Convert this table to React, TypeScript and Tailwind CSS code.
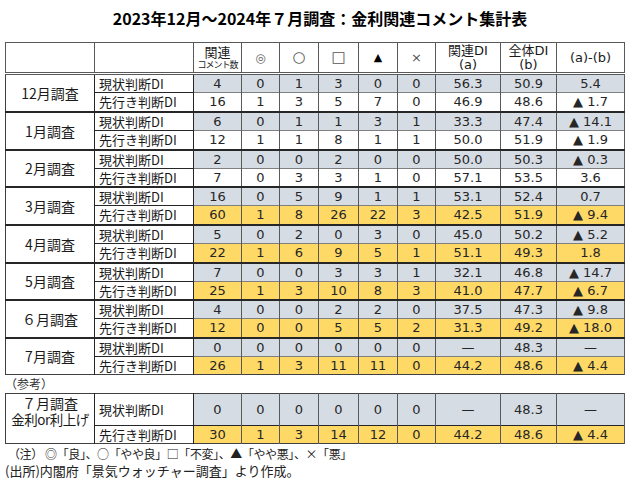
const FONT = '"DejaVu Sans", "Noto Sans CJK JP", sans-serif'
const JP = '"Noto Sans CJK JP", sans-serif'

type Row = { vals: string[]; tone: 'blue' | 'white' | 'yellow' }
type Group = { label: string; now: Row; fut: Row }

const groups: Group[] = [
  {
    label: '12月調査',
    now: { vals: ['4', '0', '1', '3', '0', '0', '56.3', '50.9', '5.4'], tone: 'blue' },
    fut: { vals: ['16', '1', '3', '5', '7', '0', '46.9', '48.6', '▲ 1.7'], tone: 'white' },
  },
  {
    label: '1月調査',
    now: { vals: ['6', '0', '1', '1', '3', '1', '33.3', '47.4', '▲ 14.1'], tone: 'blue' },
    fut: { vals: ['12', '1', '1', '8', '1', '1', '50.0', '51.9', '▲ 1.9'], tone: 'white' },
  },
  {
    label: '2月調査',
    now: { vals: ['2', '0', '0', '2', '0', '0', '50.0', '50.3', '▲ 0.3'], tone: 'blue' },
    fut: { vals: ['7', '0', '3', '3', '1', '0', '57.1', '53.5', '3.6'], tone: 'white' },
  },
  {
    label: '3月調査',
    now: { vals: ['16', '0', '5', '9', '1', '1', '53.1', '52.4', '0.7'], tone: 'blue' },
    fut: { vals: ['60', '1', '8', '26', '22', '3', '42.5', '51.9', '▲ 9.4'], tone: 'yellow' },
  },
  {
    label: '4月調査',
    now: { vals: ['5', '0', '2', '0', '3', '0', '45.0', '50.2', '▲ 5.2'], tone: 'blue' },
    fut: { vals: ['22', '1', '6', '9', '5', '1', '51.1', '49.3', '1.8'], tone: 'yellow' },
  },
  {
    label: '5月調査',
    now: { vals: ['7', '0', '0', '3', '3', '1', '32.1', '46.8', '▲ 14.7'], tone: 'blue' },
    fut: { vals: ['25', '1', '3', '10', '8', '3', '41.0', '47.7', '▲ 6.7'], tone: 'yellow' },
  },
  {
    label: '６月調査',
    now: { vals: ['4', '0', '0', '2', '2', '0', '37.5', '47.3', '▲ 9.8'], tone: 'blue' },
    fut: { vals: ['12', '0', '0', '5', '5', '2', '31.3', '49.2', '▲ 18.0'], tone: 'yellow' },
  },
  {
    label: '7月調査',
    now: { vals: ['0', '0', '0', '0', '0', '0', '—', '48.3', '—'], tone: 'blue' },
    fut: { vals: ['26', '1', '3', '11', '11', '0', '44.2', '48.6', '▲ 4.4'], tone: 'yellow' },
  },
]

const toneBg = {
  blue: 'bg-[#d6dce4]',
  white: 'bg-white',
  yellow: 'bg-[#ffd966]',
}

function Cols() {
  return (
    <colgroup>
      <col className="w-[89px]" />
      <col className="w-[99px]" />
      <col className="w-[48px]" />
      <col className="w-[38px]" />
      <col className="w-[39px]" />
      <col className="w-[40px]" />
      <col className="w-[39px]" />
      <col className="w-[38px]" />
      <col className="w-[65px]" />
      <col className="w-[56px]" />
      <col className="w-[68px]" />
    </colgroup>
  )
}

function DataCells({ row, top }: { row: Row; top: string }) {
  return (
    <>
      {row.vals.map((v, i) => (
        <td
          key={i}
          className={`${toneBg[row.tone]} ${top} border-x border-x-[#595959] text-center text-[13px] leading-none text-[#262626] p-0`}
        >
          {v}
        </td>
      ))}
    </>
  )
}

const subLabel = 'border-r border-r-[#262626] text-[13px] leading-none pl-[4px] pr-0 py-0 text-[#1a1a1a]'

export default function App() {
  return (
    <div className="w-[640px] h-[485px] bg-white text-[#1a1a1a] overflow-hidden" style={{ fontFamily: FONT }}>
      <h1
        className="text-center font-bold text-[16px] leading-none pt-[10px] pb-[16px] text-black"
        style={{ fontFamily: JP }}
      >
        2023年12月～2024年７月調査：金利関連コメント集計表
      </h1>

      <table className="ml-[5px] w-[619px] table-fixed border-collapse border border-[#404040]">
        <Cols />
        <thead>
          <tr className="h-[31px] border-b-[3px] border-double border-b-[#595959]">
            <th className="border border-[#595959] p-0" />
            <th className="border border-[#595959] p-0" />
            <th className="border border-[#595959] font-normal p-0 leading-none">
              <div className="text-[13px] leading-[14px]" style={{ fontFamily: JP }}>関連</div>
              <div className="text-[9px] leading-[12px] tracking-[-1px]" style={{ fontFamily: JP }}>コメント数</div>
            </th>
            <th className="border border-[#595959] font-normal p-0 leading-none text-[12px] text-[#666]">◎</th>
            <th className="border border-[#595959] font-normal p-0 leading-none text-[15px] text-[#555]">○</th>
            <th className="border border-[#595959] font-normal p-0 leading-none text-[15px] text-[#555]">□</th>
            <th className="border border-[#595959] font-normal p-0 leading-none text-[11px] text-black">▲</th>
            <th className="border border-[#595959] font-normal p-0 leading-none text-[13px] text-[#555]">×</th>
            <th className="border border-[#595959] font-normal text-[13px] leading-[14px] p-0">
              <div>関連DI</div>
              <div>(a)</div>
            </th>
            <th className="border border-[#595959] font-normal text-[13px] leading-[14px] p-0">
              <div>全体DI</div>
              <div>(b)</div>
            </th>
            <th className="border border-[#595959] font-normal p-0 leading-none text-[13px]">(a)-(b)</th>
          </tr>
        </thead>
        <tbody>
          {groups.map((g, gi) => {
            const gTop = gi === 0 ? '' : 'border-t-2 border-t-[#262626]'
            const futH = gi === 2 || gi === 5 || gi === 7 ? 'h-[18px]' : 'h-[19px]'
            return [
              <tr key={`${gi}a`} className="h-[19px]">
                <td
                  rowSpan={2}
                  className={`${gTop} border-r border-r-[#262626] text-center text-[14px] leading-none p-0`}
                  style={{ fontFamily: JP }}
                >
                  {g.label}
                </td>
                <td className={`${gTop} ${subLabel}`} style={{ fontFamily: JP }}>
                  現状判断DI
                </td>
                <DataCells row={g.now} top={gTop} />
              </tr>,
              <tr key={`${gi}b`} className={futH}>
                <td className={`border-t border-t-[#262626] ${subLabel}`} style={{ fontFamily: JP }}>
                  先行き判断DI
                </td>
                <DataCells row={g.fut} top="border-t border-t-[#7f7f7f]" />
              </tr>,
            ]
          })}
        </tbody>
      </table>

      <div className="ml-[5px] mt-[1px] text-[12px] leading-[16px] text-[#333]" style={{ fontFamily: JP }}>
        （参考）
      </div>

      <table className="ml-[5px] mt-[1px] w-[619px] table-fixed border-collapse border border-[#404040]">
        <Cols />
        <tbody>
          <tr className="h-[32px]">
            <td
              rowSpan={2}
              className="border-r border-r-[#262626] text-center align-top text-[14px] leading-[16px] pt-[1px] px-0 pb-0"
              style={{ fontFamily: JP }}
            >
              <div>７月調査</div>
              <div className="text-[13.5px] tracking-[-0.5px]">金利or利上げ</div>
            </td>
            <td className={subLabel} style={{ fontFamily: JP }}>
              現状判断DI
            </td>
            <DataCells
              row={{ vals: ['0', '0', '0', '0', '0', '0', '—', '48.3', '—'], tone: 'blue' }}
              top=""
            />
          </tr>
          <tr className="h-[18px]">
            <td className={`border-t border-t-[#262626] ${subLabel}`} style={{ fontFamily: JP }}>
              先行き判断DI
            </td>
            <DataCells
              row={{ vals: ['30', '1', '3', '14', '12', '0', '44.2', '48.6', '▲ 4.4'], tone: 'yellow' }}
              top="border-t border-t-[#262626]"
            />
          </tr>
        </tbody>
      </table>

      <div className="ml-[8px] mt-[1px] text-[12px] leading-[17px] tracking-[-0.4px] text-[#222]" style={{ fontFamily: JP }}>
        （注） ◎「良」、○「やや良」□「不変」、▲「やや悪」、×「悪」
      </div>
      <div className="ml-[5px] text-[13px] leading-[17px] text-[#222]" style={{ fontFamily: JP }}>
        (出所)内閣府「景気ウォッチャー調査」より作成。
      </div>
    </div>
  )
}
